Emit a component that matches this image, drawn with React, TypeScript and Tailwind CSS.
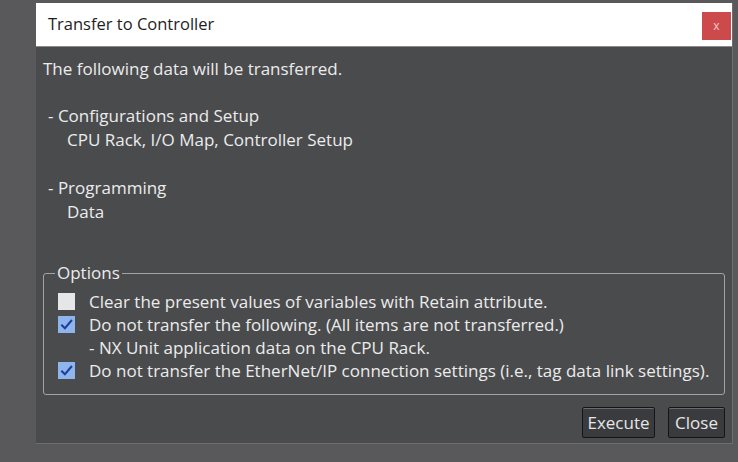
import React from "react";

const font = { fontFamily: '"Open Sans", "Noto Sans", sans-serif' };

function CheckBox({ checked }: { checked: boolean }) {
  if (!checked) {
    return <span className="block h-[17px] w-[17px] bg-[#e6e6e6]" />;
  }
  return (
    <span className="flex h-[17px] w-[17px] items-center justify-center bg-[#8fb5ee]">
      <svg viewBox="0 0 16 16" className="h-[15px] w-[15px]">
        <path d="M2.5 8.2 L6.3 12 L13.8 3.2" fill="none" stroke="#1f3f9a" strokeWidth="2.2" />
      </svg>
    </span>
  );
}

function OptionRow({ checked, children }: { checked?: boolean; children: React.ReactNode }) {
  return (
    <div className="flex h-[23px] items-center">
      <div className="w-[31px] shrink-0">{checked !== undefined && <CheckBox checked={checked} />}</div>
      <span className="whitespace-nowrap">{children}</span>
    </div>
  );
}

export default function App() {
  return (
    <div className="h-[462px] w-[738px] overflow-hidden bg-[#59595b] pl-[36px] pt-[3px]" style={font}>
      <div className="flex h-[441px] w-[697px] flex-col border-b border-r border-[#6d6d6f] bg-[#4a4b4d] text-[17px] text-[#ececec]">
        {/* title bar */}
        <div className="flex h-[44px] shrink-0 items-center justify-between border-b border-[#8a8a8a] bg-white pl-[12px] pr-[1px]">
          <span className="text-[16.5px] text-[#1e1e1e]">Transfer to Controller</span>
          <span className="mt-[2px] flex h-[28px] w-[29px] items-center justify-center bg-[#cc4a4c] text-[12px] text-[#f3c8c8]">
            x
          </span>
        </div>

        <div className="flex flex-1 flex-col px-[7px] pt-[10px] leading-[24px]">
          <div>The following data will be transferred.</div>
          <div className="h-[23px]" />
          <div className="pl-[5px]">- Configurations and Setup</div>
          <div className="pl-[24px]">CPU Rack, I/O Map, Controller Setup</div>
          <div className="h-[24px]" />
          <div className="pl-[5px]">- Programming</div>
          <div className="pl-[24px]">Data</div>

          <fieldset className="mt-[40px] h-[131px] rounded-[3px] border border-[#a3a3a3] pb-0 pl-[14px] pr-0 leading-[23px]">
            <legend className="-ml-[3px] px-[2px] leading-[18px]">Options</legend>
            <div className="mt-[8px]">
              <OptionRow checked={false}>Clear the present values of variables with Retain attribute.</OptionRow>
              <OptionRow checked={true}>Do not transfer the following. (All items are not transferred.)</OptionRow>
              <OptionRow>- NX Unit application data on the CPU Rack.</OptionRow>
              <OptionRow checked={true}>
                Do not transfer the EtherNet/IP connection settings (i.e., tag data link settings).
              </OptionRow>
            </div>
          </fieldset>

          <div className="mt-[12px] flex justify-end gap-[13px]">
            <button className="h-[31px] w-[73px] rounded-[2px] border border-[#151515] bg-[#3a3b3e] text-[17px] leading-none text-[#e6e6e6] shadow-[inset_0_1px_0_#6a6b6e]">
              Execute
            </button>
            <button className="h-[31px] w-[57px] rounded-[2px] border border-[#151515] bg-[#3a3b3e] text-[17px] leading-none text-[#e6e6e6] shadow-[inset_0_1px_0_#6a6b6e]">
              Close
            </button>
          </div>
        </div>
      </div>
    </div>
  );
}
